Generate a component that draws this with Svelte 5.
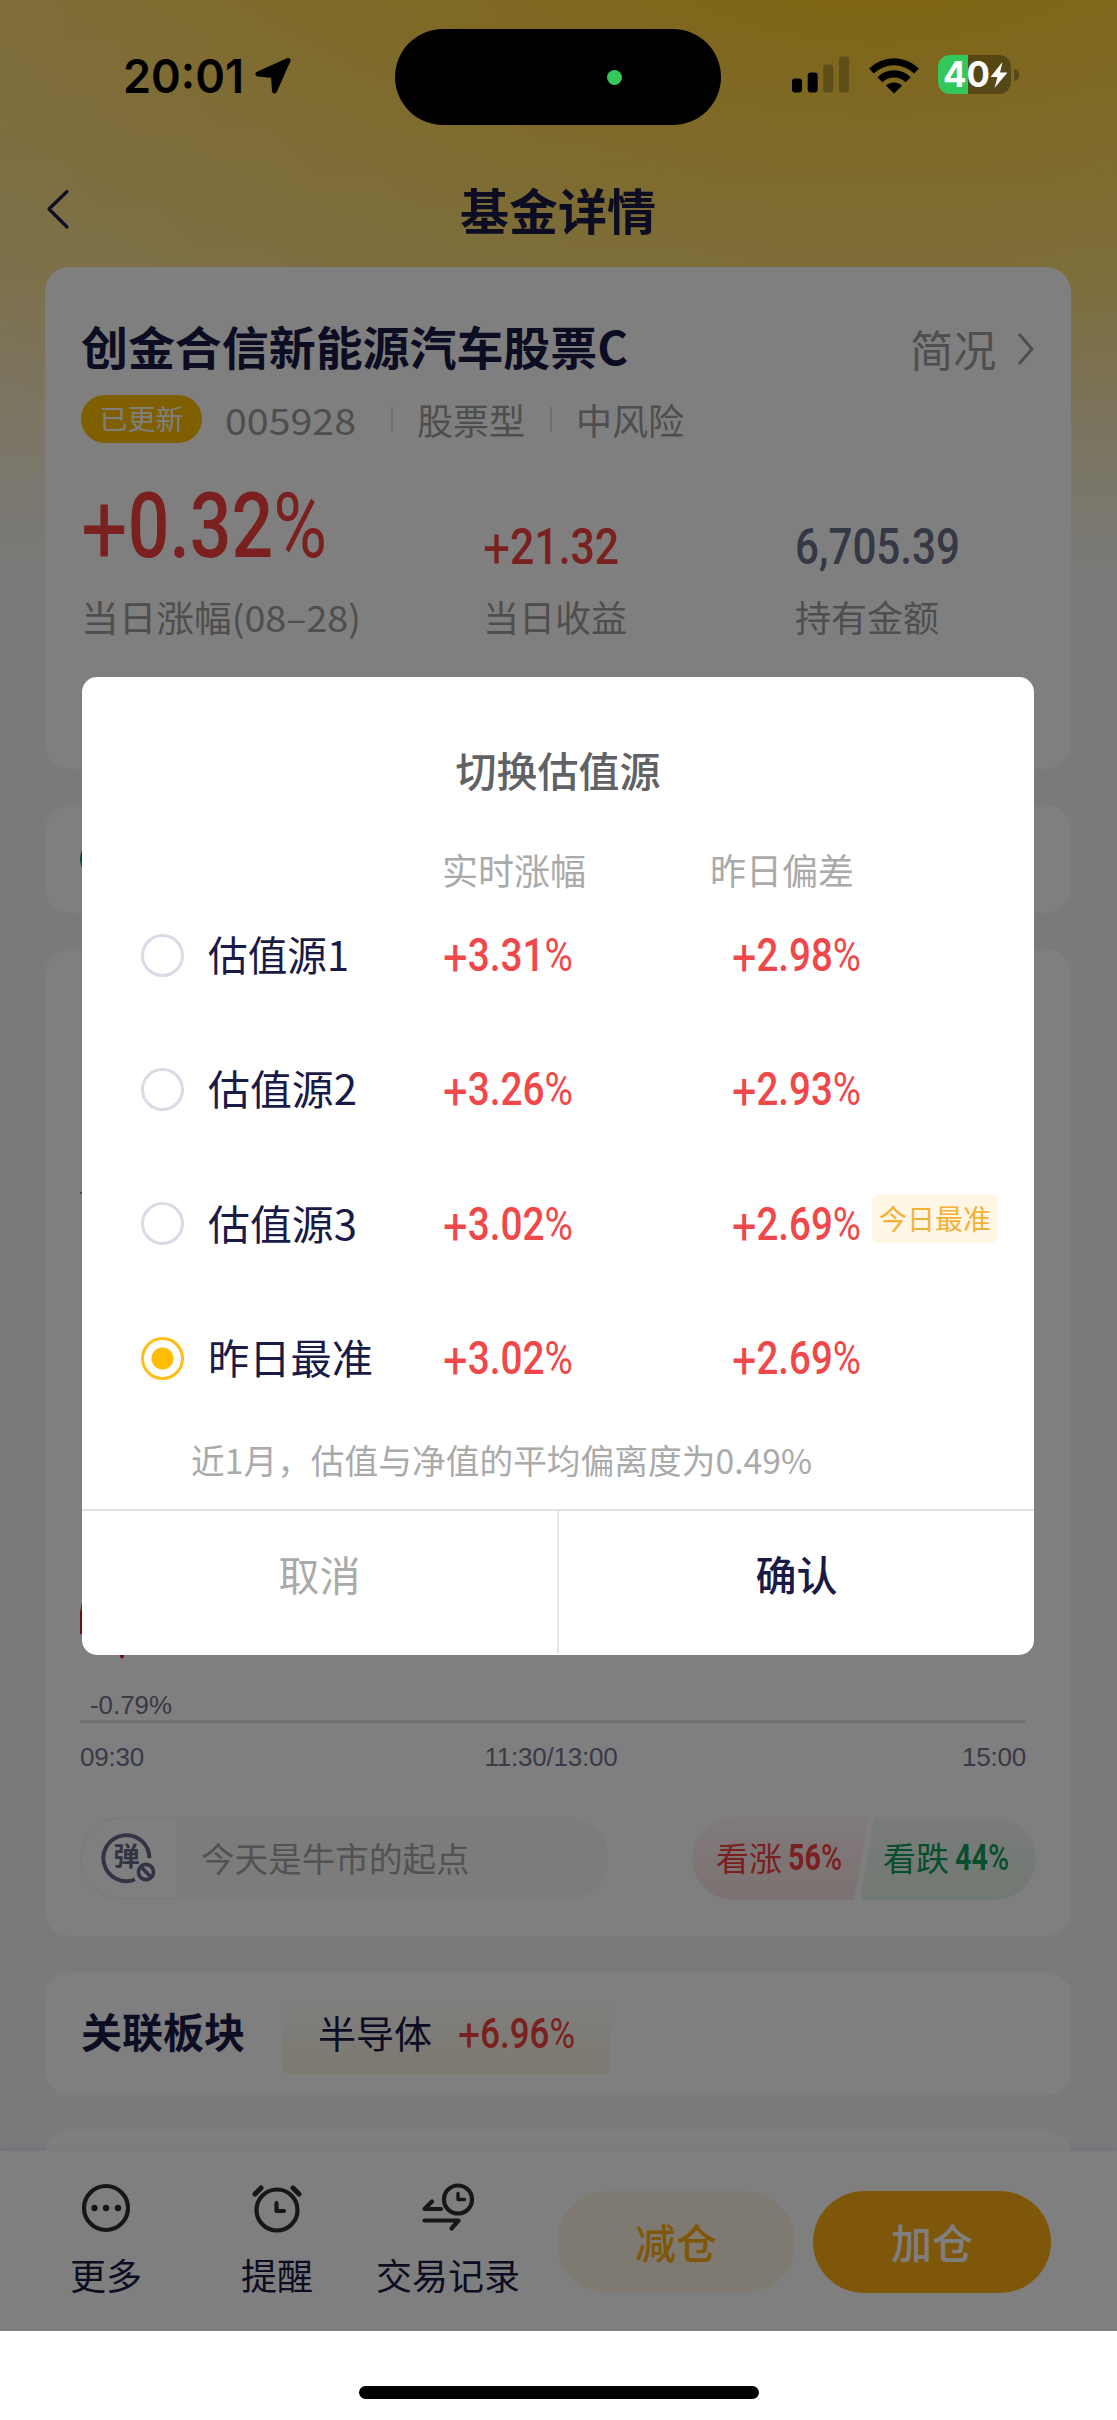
<script lang="ts">
	interface Source {
		name: string;
		nameWidth: number;
		change: string;
		deviation: string;
		best?: boolean;
	}

	const sources: Source[] = [
		{ name: '估值源1', nameWidth: 141, change: '+3.31%', deviation: '+2.98%' },
		{ name: '估值源2', nameWidth: 149, change: '+3.26%', deviation: '+2.93%' },
		{ name: '估值源3', nameWidth: 149, change: '+3.02%', deviation: '+2.69%', best: true },
		{ name: '昨日最准', nameWidth: 165, change: '+3.02%', deviation: '+2.69%' }
	];

	let selected = $state(3);

	// condenses a single line of text to the given width
	function fit(node: HTMLElement, width: number) {
		const natural = node.getBoundingClientRect().width;
		node.style.width = width + 'px';
		node.style.transform = `scaleX(${width / natural})`;
	}
</script>

<!-- number with a lighter sign and percent mark -->
{#snippet figure(value: string, width: number)}
	<span class="fit" use:fit={width}
		>{#each value as char}{#if char === '+'}<span class="plus">+</span>{:else if char === '%'}<span class="percent">%</span
				>{:else}{char}{/if}{/each}</span
	>
{/snippet}

<div class="screen">
	<header class="status">
		<div class="clock">
			<span class="fit" use:fit={121}>20:01</span>
			<svg width="38" height="38" viewBox="0 0 38 38">
				<path d="M34 3.5 L4 17 L19.5 18.5 L20.5 34 Z" stroke="#000" stroke-width="5" stroke-linejoin="round" />
			</svg>
		</div>
		<div class="island"><i></i></div>
		<div class="indicators">
			<svg class="signal" width="57" height="37" viewBox="0 0 57 37">
				<rect x="0" y="22.5" width="10" height="14" rx="3" />
				<rect x="15.7" y="16.5" width="10" height="20" rx="3" />
				<rect x="31.3" y="8.5" width="10" height="28" rx="3" opacity=".25" />
				<rect x="47" y="0.5" width="10" height="36" rx="3" opacity=".25" />
			</svg>
			<svg class="wifi" width="52" height="38" viewBox="0 0 52 38">
				<path d="M1 12.5 A35.5 35.5 0 0 1 51 12.5 L46.2 17.6 A28.6 28.6 0 0 0 5.8 17.6 Z" />
				<path d="M9.3 21.2 A23.6 23.6 0 0 1 42.7 21.2 L37.6 26.2 A16.4 16.4 0 0 0 14.4 26.2 Z" />
				<path d="M18 29.8 A11.4 11.4 0 0 1 34 29.8 L26 37.5 Z" />
			</svg>
			<div class="battery">
				<span class="fit" use:fit={47}>40</span>
				<svg width="18" height="26" viewBox="0 0 18 26">
					<path d="M12.5 0 L0.5 15 H7.5 L4.5 26 L17.5 10.5 H10 Z" fill="#fff" />
				</svg>
			</div>
			<i class="cap"></i>
		</div>
	</header>

	<nav>
		<svg width="24" height="42" viewBox="0 0 24 42">
			<path d="M21 3.5 L3 21 L21 39" fill="none" stroke="#1a1c4c" stroke-width="3.2" stroke-linecap="round" stroke-linejoin="round" />
		</svg>
		<h1>基金详情</h1>
	</nav>

	<main>
		<section class="card summary">
			<div class="name-row">
				<h2><span class="fit" use:fit={547}>创金合信新能源汽车股票C</span></h2>
				<span class="brief">简况</span>
				<svg width="18" height="34" viewBox="0 0 18 34">
					<path d="M2 2 L15 17 L2 32" fill="none" stroke="#9c9c9c" stroke-width="3" />
				</svg>
			</div>
			<div class="tags">
				<span class="updated">已更新</span>
				<span class="code"><span class="fit" use:fit={131}>005928</span></span>
				<i></i>
				<span>股票型</span>
				<i class="second"></i>
				<span>中风险</span>
			</div>
			<div class="figures">
				<div>
					<b class="din big red">{@render figure('+0.32%', 246)}</b>
					<small><span class="fit" use:fit={280}>当日涨幅(08–28)</span></small>
				</div>
				<div>
					<b class="din red">{@render figure('+21.32', 136)}</b>
					<small>当日收益</small>
				</div>
				<div>
					<b class="din slate">{@render figure('6,705.39', 165)}</b>
					<small>持有金额</small>
				</div>
			</div>
		</section>

		<section class="card strip"><i></i></section>

		<section class="card chart">
			<svg class="plot" width="946" height="719" viewBox="0 0 946 719">
				<path d="M0 244 h4" stroke="#8a8c9c" stroke-width="2" />
				<path d="M6 640 L1.5 664 L1 685 L16 650 L34 664 L42 709 L50 664" fill="none" stroke="#d81e28" stroke-width="3" />
			</svg>
			<div class="low"><span class="fit" use:fit={82}>-0.79%</span></div>
			<div class="axis">
				<span>09:30</span>
				<span class="noon">11:30/13:00</span>
				<span>15:00</span>
			</div>
			<div class="talk">
				<div class="danmaku">
					<div class="toggle">
						<svg width="58" height="54" viewBox="0 0 58 54">
							<path d="M48.4 27 A23 23 0 1 0 34 48.5" fill="none" stroke="#646787" stroke-width="4" />
							<text x="12.5" y="35" font-size="26" font-weight="700" fill="#646787">弹</text>
							<circle cx="45" cy="41" r="7.6" fill="none" stroke="#646787" stroke-width="3.6" />
							<path d="M40 36 L50 46" stroke="#646787" stroke-width="3.6" />
						</svg>
					</div>
					<span>今天是牛市的起点</span>
				</div>
				<div class="vote">
					<div class="up">看涨<b class="din">{@render figure('56%', 54)}</b></div>
					<div class="down">看跌<b class="din">{@render figure('44%', 54)}</b></div>
				</div>
			</div>
		</section>

		<section class="card sector">
			<h3>关联板块</h3>
			<div class="chip">
				<span>半导体</span>
				<b class="din red">{@render figure('+6.96%', 117)}</b>
			</div>
		</section>

		<section class="card rest"></section>
	</main>

	<footer>
		<div class="action more">
			<svg width="52" height="52" viewBox="0 0 52 52">
				<circle cx="26" cy="26" r="22" />
				<g class="dots"><circle cx="14.5" cy="26" r="3.2" /><circle cx="26" cy="26" r="3.2" /><circle cx="38" cy="26" r="3.2" /></g>
			</svg>
			<span>更多</span>
		</div>
		<div class="action remind">
			<svg width="52" height="52" viewBox="0 0 52 52">
				<circle cx="26" cy="28" r="20.5" />
				<path d="M25.5 21 V29 H33" />
				<path d="M4 12 L10 6 M42 6 L48 12" stroke-width="5" />
			</svg>
			<span>提醒</span>
		</div>
		<div class="action trade">
			<svg width="54" height="52" viewBox="0 0 54 52">
				<circle cx="37" cy="17.5" r="14" />
				<path d="M37 11.5 V17.5 H43.5" stroke-width="3.4" />
				<path d="M20 27 H3.5 L11 19.5" />
				<path d="M3.5 38.5 H37.5 L30.5 46.5" />
			</svg>
			<span>交易记录</span>
		</div>
		<button class="reduce">减仓</button>
		<button class="add">加仓</button>
	</footer>

	<div class="home"><i></i></div>

	<div class="mask">
		<div class="dialog">
			<h4>切换估值源</h4>
			<div class="columns">
				<span>实时涨幅</span>
				<span>昨日偏差</span>
			</div>
			{#each sources as source, i}
				<!-- svelte-ignore a11y_click_events_have_key_events, a11y_no_static_element_interactions -->
				<div class="row" onclick={() => (selected = i)}>
					<i class="radio" class:checked={selected === i}></i>
					<span class="label"><span class="fit" use:fit={source.nameWidth}>{source.name}</span></span>
					<b class="din change">{@render figure(source.change, 130)}</b>
					<b class="din">{@render figure(source.deviation, 129)}</b>
					{#if source.best}
						<em>今日最准</em>
					{/if}
				</div>
			{/each}
			<p><span class="fit" use:fit={621}>近1月，估值与净值的平均偏离度为0.49%</span></p>
			<div class="buttons">
				<button>取消</button>
				<button class="ok">确认</button>
			</div>
		</div>
	</div>
</div>

<style>
	:global(body) {
		background: #fff;
	}
	.screen {
		position: relative;
		display: flex;
		flex-direction: column;
		width: 1117px;
		height: 2420px;
		overflow: hidden;
		font-family: 'Noto Sans CJK SC', sans-serif;
		color: #191a46;
		white-space: nowrap;
		background:
			linear-gradient(180deg, rgba(242, 244, 248, 0) 0, rgba(242, 244, 248, 0.2) 270px, #f2f4f8 600px),
			radial-gradient(ellipse 1250px 760px at 880px -40px, #ffca24 0, #fdd658 50%, #fde296 100%);
	}
	h1, h2, h3, h4, p {
		margin: 0;
	}
	i, em {
		font-style: normal;
	}
	svg {
		display: block;
		flex: none;
	}
	button {
		border: 0;
		padding: 0;
		background: none;
		font-family: inherit;
	}
	.fit {
		display: inline-block;
		transform-origin: 0 50%;
	}
	.din {
		font-family: Roboto, sans-serif;
		font-weight: 500;
	}
	.plus {
		display: inline-block;
		font-size: 1.12em;
		font-weight: 400;
		line-height: 0;
		transform: translateY(0.07em);
	}
	.percent {
		font-weight: 400;
	}
	.red {
		color: #f5413f;
	}
	.slate {
		color: #6b708a;
	}

	/* status bar stays above the mask */
	.status {
		position: relative;
		z-index: 3;
		display: flex;
		height: 154px;
		flex: none;
	}
	.clock {
		display: flex;
		width: 395px;
		padding: 48px 0 0 123px;
		box-sizing: border-box;
		font: 600 47px/56px Inter, sans-serif;
		color: #000;
	}
	.clock svg {
		margin: 9px 0 0 10px;
	}
	.island {
		width: 326px;
		height: 96px;
		margin-top: 29px;
		border-radius: 48px;
		background: #000;
		display: flex;
		align-items: center;
	}
	.island i {
		width: 15px;
		height: 15px;
		margin-left: 212px;
		border-radius: 50%;
		background: #34c759;
	}
	.indicators {
		display: flex;
		align-items: flex-start;
		padding: 56px 0 0 71px;
	}
	.wifi {
		margin-left: 19px;
	}
	.battery {
		display: flex;
		align-items: center;
		width: 73px;
		height: 39px;
		box-sizing: border-box;
		margin: -1px 0 0 18px;
		padding-left: 5px;
		border-radius: 12px;
		background: linear-gradient(90deg, #34c759 30px, rgba(0, 0, 0, 0.32) 30px);
		font: 700 36px/39px Inter, sans-serif;
		color: #fff;
	}
	.cap {
		width: 5px;
		height: 12px;
		margin: 13px 0 0 3px;
		border-radius: 0 6px 6px 0;
		background: rgba(0, 0, 0, 0.3);
	}

	nav {
		display: flex;
		align-items: center;
		height: 113px;
		flex: none;
		padding-left: 46px;
	}
	nav svg {
		margin-top: -3px;
	}
	h1 {
		width: 976px;
		margin-top: -4px;
		text-align: center;
		font-size: 49px;
		line-height: 60px;
		font-weight: 700;
	}

	main {
		display: flex;
		flex-direction: column;
		gap: 36px;
		height: 1884px;
		flex: none;
		padding: 0 46px 0 45px;
		overflow: hidden;
	}
	.card {
		flex: none;
		box-sizing: border-box;
		border-radius: 25px;
		background: #fff;
	}
	.summary {
		height: 502px;
		padding: 48px 36px 0;
	}
	.name-row {
		display: flex;
		align-items: center;
		height: 60px;
	}
	h2 {
		width: 832px;
		font-size: 46px;
		line-height: 60px;
		font-weight: 700;
	}
	.brief {
		width: 107px;
		padding-top: 5px;
		font-size: 43px;
		line-height: 60px;
		color: #9c9c9c;
	}
	.name-row svg {
		margin-top: 8px;
	}
	.tags {
		display: flex;
		align-items: center;
		height: 48px;
		margin-top: 20px;
		font-size: 36px;
		line-height: 46px;
		color: #9c9c9c;
	}
	.updated {
		width: 121px;
		padding-bottom: 2px;
		border-radius: 24px;
		background: #ffbe00;
		color: #fff;
		font-size: 28px;
		text-align: center;
	}
	.code {
		margin-left: 23px;
	}
	.tags i {
		width: 2px;
		height: 25px;
		margin: 0 24px 0 35px;
		background: #dcdcdc;
	}
	.tags i.second {
		margin-left: 25px;
	}
	.figures {
		display: grid;
		grid-template-columns: 402px 312px auto;
		align-items: end;
		margin-top: 32px;
	}
	.figures b {
		display: block;
		font-size: 50px;
		line-height: 60px;
		margin-bottom: 14px;
	}
	.figures .big {
		font-size: 90px;
		line-height: 104px;
		margin-bottom: 12px;
	}
	.figures small {
		display: block;
		font-size: 36px;
		line-height: 50px;
		color: #9c9c9c;
	}

	.strip {
		height: 108px;
		padding: 34px 35px;
	}
	.strip i {
		display: block;
		width: 40px;
		height: 40px;
		border-radius: 50%;
		background: #0a9e55;
	}

	.chart {
		height: 987px;
		padding: 0 35px;
	}
	.low {
		width: 946px;
		height: 55px;
		padding: 23px 0 0 10px;
		box-sizing: border-box;
		border-bottom: 3px solid #dddee4;
		font: 25px/29px 'Liberation Sans', sans-serif;
		color: #71748f;
	}
	.axis {
		display: flex;
		justify-content: space-between;
		width: 946px;
		margin-top: 19px;
		font: 26px/30px 'Liberation Sans', sans-serif;
		letter-spacing: -0.2px;
		color: #71748f;
	}
	.noon {
		margin-right: 4px;
	}
	.talk {
		display: flex;
		justify-content: space-between;
		width: 956px;
		margin-top: 45px;
	}
	.danmaku {
		display: flex;
		align-items: center;
		width: 528px;
		height: 83px;
		box-sizing: border-box;
		border: 2px solid #f6f6f8;
		border-radius: 42px;
		overflow: hidden;
		background: #f8f8f8;
		font-size: 33.6px;
		line-height: 50px;
		color: #a4a4a4;
	}
	.danmaku span {
		padding-bottom: 2px;
	}
	.toggle {
		width: 94px;
		height: 80px;
		margin-right: 25px;
		padding: 12px 0 0 19px;
		box-sizing: border-box;
		background: #fff;
	}
	.vote {
		display: flex;
		width: 344px;
		height: 83px;
		font-size: 33px;
		line-height: 80px;
	}
	.up, .down {
		display: flex;
		box-sizing: border-box;
	}
	.up b, .down b {
		margin-left: 6px;
		font-size: 36px;
		font-weight: 700;
		line-height: 83px;
	}
	.vote .percent {
		font-weight: 500;
	}
	.up {
		width: 177px;
		padding-left: 24px;
		border-radius: 42px 6px 6px 42px;
		background: linear-gradient(#fff4f4, #fbe4e5);
		color: #f5413f;
		clip-path: polygon(0 0, 100% 0, 162px 100%, 0 100%);
	}
	.down {
		width: 176px;
		margin-left: -9px;
		padding-left: 23px;
		border-radius: 6px 42px 42px 6px;
		background: linear-gradient(#f4f8f4, #e4f1e6);
		color: #0c9d5b;
		clip-path: polygon(14px 0, 100% 0, 100% 100%, 0 100%);
	}

	.sector {
		display: flex;
		height: 123px;
		padding: 0 36px;
	}
	h3 {
		width: 201px;
		font-size: 41px;
		line-height: 116px;
		font-weight: 700;
	}
	.chip {
		display: flex;
		align-items: center;
		width: 328px;
		height: 78px;
		box-sizing: border-box;
		margin-top: 24px;
		padding: 0 0 8px 36px;
		border-radius: 8px;
		background: linear-gradient(#fff, #fbf2df);
		font-size: 38px;
	}
	.chip b {
		margin: 5px 0 0 26px;
		font-size: 42px;
	}
	.rest {
		height: 200px;
	}

	footer {
		display: flex;
		height: 180px;
		flex: none;
		background: #fff;
		box-shadow: 0 -3px 8px rgba(40, 45, 90, 0.06);
	}
	.action {
		display: flex;
		flex-direction: column;
		align-items: center;
		padding-top: 31px;
		box-sizing: border-box;
		font-size: 36px;
		line-height: 50px;
	}
	.action svg {
		margin-bottom: 15px;
		fill: none;
		stroke: #2e2e2e;
		stroke-width: 4.2px;
		stroke-linecap: round;
		stroke-linejoin: round;
	}
	.action .dots {
		fill: #2e2e2e;
		stroke: none;
	}
	.more {
		width: 74px;
		margin-left: 69px;
	}
	.remind {
		width: 74px;
		margin-left: 97px;
	}
	.trade {
		width: 146px;
		margin-left: 61px;
	}
	footer button {
		width: 238px;
		height: 102px;
		margin-top: 40px;
		padding-bottom: 3px;
		border-radius: 51px;
		font-size: 41px;
		font-weight: 500;
	}
	.reduce {
		margin-left: 36px;
		background: #fff5e2;
		color: #ffae16;
	}
	.add {
		margin-left: 18px;
		background: #ffae16;
		color: #fff;
	}
	.home {
		flex: 1;
		background: #fff;
	}
	.home i {
		display: block;
		width: 400px;
		height: 13px;
		margin: 55px auto 0;
		border-radius: 7px;
		background: #000;
	}

	.mask {
		position: absolute;
		inset: 0 0 89px 0;
		z-index: 2;
		background: rgba(0, 0, 0, 0.5);
	}
	.dialog {
		width: 952px;
		height: 978px;
		margin: 677px 0 0 82px;
		border-radius: 15px;
		background: #fff;
		overflow: hidden;
	}
	h4 {
		padding-top: 62px;
		text-align: center;
		font-size: 41px;
		line-height: 60px;
		font-weight: 500;
		color: #606266;
	}
	.columns {
		display: flex;
		gap: 124px;
		height: 43px;
		padding: 45px 0 0 360px;
		font-size: 36px;
		line-height: 50px;
		color: #aaa;
	}
	.row {
		display: flex;
		align-items: center;
		height: 134.3px;
		margin-left: 59px;
	}
	.columns + .row {
		margin-top: 1px;
	}
	.radio {
		flex: none;
		width: 43px;
		height: 43px;
		box-sizing: border-box;
		border: 3px solid #d9dbe6;
		border-radius: 50%;
	}
	.radio.checked {
		border-color: #fdbe1a;
		background: radial-gradient(circle, #ffbc05 10.5px, #fff 11.5px);
	}
	.label {
		width: 235px;
		margin: -4px 0 0 24px;
		font-size: 41px;
		line-height: 60px;
	}
	.row b {
		width: 131px;
		font-size: 46px;
		color: #f0484a;
	}
	.row .change {
		width: 289px;
	}
	.row em {
		width: 126px;
		height: 48px;
		margin: -9px 0 0 9px;
		border-radius: 6px;
		background: #fff6e6;
		font-size: 28px;
		line-height: 46px;
		text-align: center;
		color: #f3b135;
	}
	p {
		margin-top: 10px;
		padding-left: 109px;
		font-size: 34px;
		line-height: 50px;
		color: #aaa;
	}
	.buttons {
		display: flex;
		height: 143px;
		margin-top: 24px;
		border-top: 2px solid #e2e2e2;
	}
	.buttons button {
		flex: 1;
		padding-bottom: 20px;
		font-size: 41px;
		color: #aaa;
	}
	.buttons .ok {
		border-left: 2px solid #e6e6e6;
		font-weight: 500;
		color: #191a46;
	}
</style>
